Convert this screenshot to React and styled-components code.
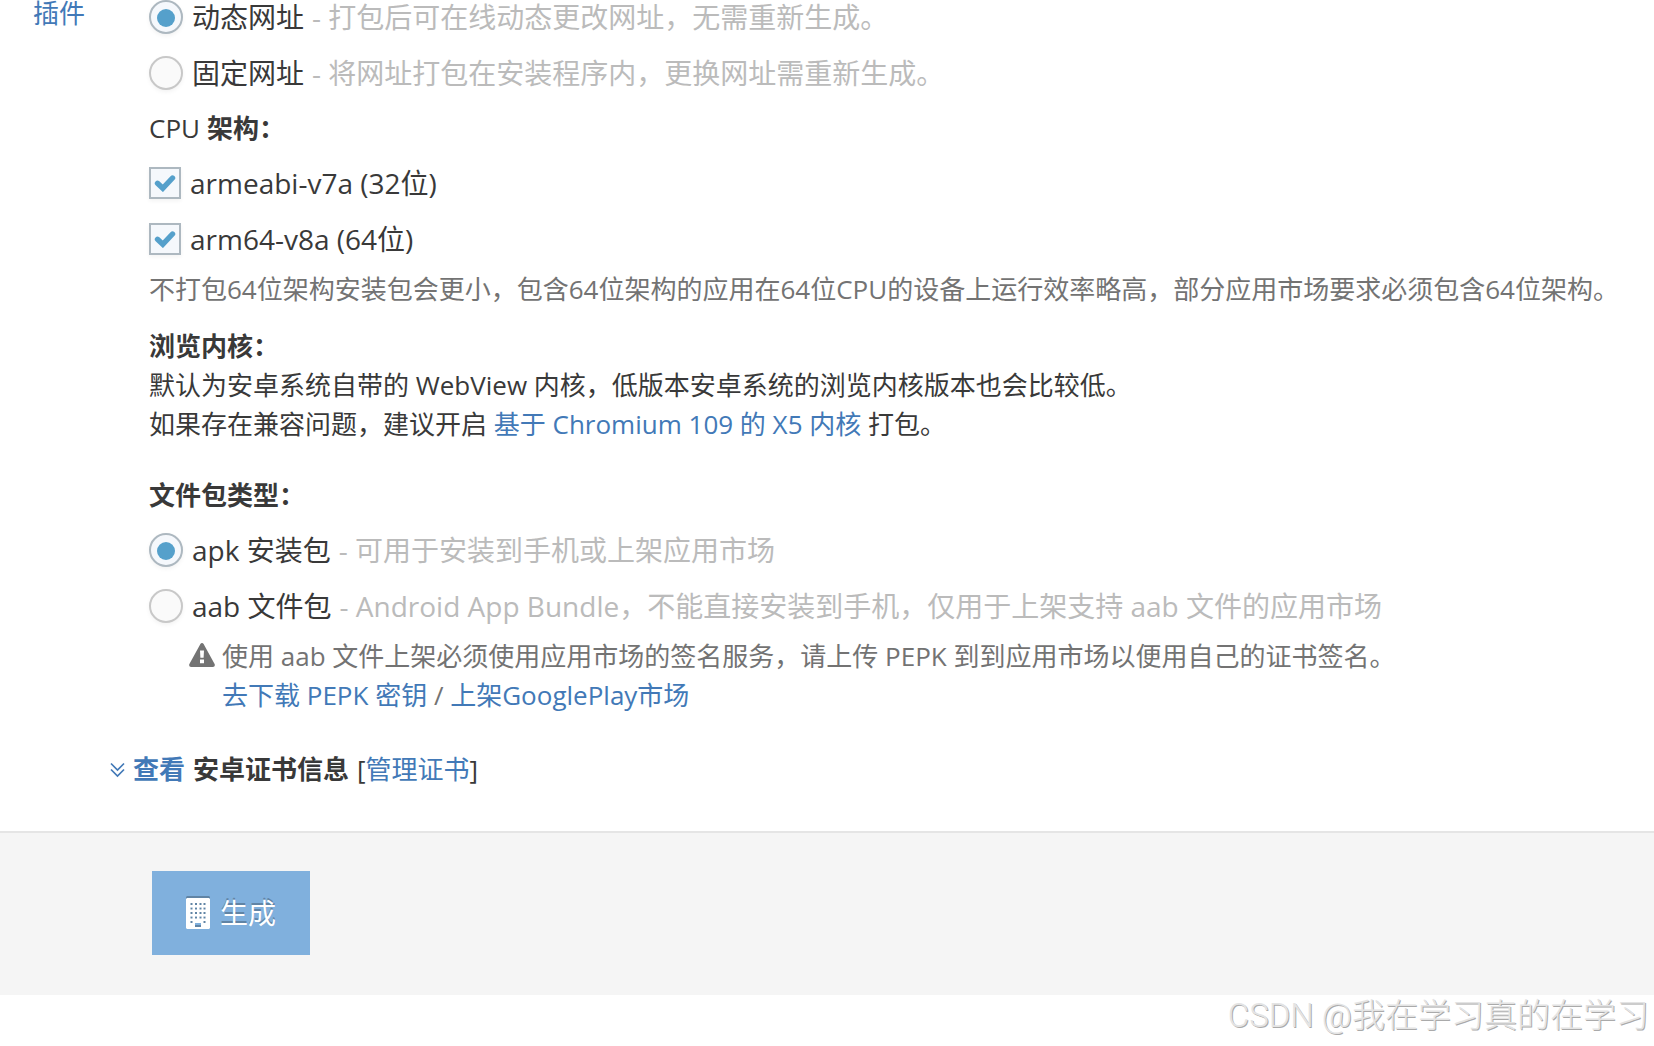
import styled, { createGlobalStyle, css } from "styled-components";

const GlobalStyle = createGlobalStyle`
  * {
    box-sizing: border-box;
  }

  body {
    margin: 0;
    overflow-x: hidden;
    background: #fff;
    color: #393939;
    font-family: "Open Sans", "Noto Sans CJK SC", sans-serif;
    font-size: 26px;
    line-height: 39px;
  }
`;

const Page = styled.div`
  display: flow-root;
`;

const Columns = styled.div`
  display: flex;
  align-items: flex-start;
  margin-top: -11px;
`;

const Sidebar = styled.nav`
  flex: none;
  width: 110px;
  padding: 11px 0 0 33px;
  line-height: 26px;
`;

const Link = styled.a`
  color: #4279b7;
  text-decoration: none;
  font-weight: ${({ $bold }) => ($bold ? 700 : 400)};
`;

const Content = styled.main`
  flex: 1;
  min-width: 0;
  padding-bottom: 42px;
`;

const Fields = styled.div`
  padding-left: 39px;
`;

const Group = styled.section`
  margin-bottom: ${({ $gap }) => $gap || 0}px;
`;

const Heading = styled.div`
  display: flex;
  align-items: center;
  gap: 7px;
  height: ${({ $tall }) => ($tall ? 54 : 39)}px;
  margin-bottom: ${({ $gap }) => $gap || 0}px;
`;

const Option = styled.label`
  display: flex;
  align-items: center;
  height: 56px;
  font-size: 28px;
  white-space: nowrap;
`;

const Muted = styled.span`
  margin-left: 8px;
  color: #bbb;
`;

const controlStyles = css`
  appearance: none;
  flex: none;
  margin: 0;
  border: 2px solid #c8c8c8;
  background: #fafafa;
  box-shadow: 0 2px 4px rgba(0, 0, 0, 0.05);

  &:checked {
    border-color: #adb8c0;
    background: #f5f8fc;
  }
`;

const Radio = styled.input.attrs({ type: "radio" })`
  ${controlStyles}
  display: grid;
  place-items: center;
  width: 34px;
  height: 34px;
  margin-right: 9px;
  border-radius: 50%;

  &:checked::before {
    content: "";
    width: 18px;
    height: 18px;
    margin-top: 2px;
    border-radius: 50%;
    background: #55a0cb;
  }
`;

const CheckBox = styled.span`
  display: grid;
  place-items: center;
  margin-right: 9px;

  > * {
    grid-area: 1 / 1;
  }

  svg {
    pointer-events: none;
  }

  input:not(:checked) + svg {
    visibility: hidden;
  }
`;

const CheckInput = styled.input.attrs({ type: "checkbox" })`
  ${controlStyles}
  width: 32px;
  height: 32px;
`;

const Text = styled.p`
  margin: 0;
`;

const Help = styled(Text)`
  margin: 3px 0 18px;
  color: #737373;
`;

const Notice = styled.div`
  display: grid;
  grid-template-columns: 26px 1fr;
  column-gap: 7px;
  margin: 3px 0 35px 40px;
  color: #737373;

  svg {
    margin-top: 6px;
  }
`;

const Certificate = styled.div`
  display: flex;
  align-items: center;
  gap: 8px;
`;

const Footer = styled.footer`
  border-top: 2px solid #e5e5e5;
  background: #f5f5f5;
  padding: 38px 0 40px 152px;
`;

const GenerateButton = styled.button`
  display: flex;
  align-items: center;
  justify-content: center;
  gap: 10px;
  width: 158px;
  height: 84px;
  border: 0;
  background: #80b0dd;
  color: #fff;
  font: inherit;
  font-size: 28px;
  text-shadow: 0 -2px 0 rgba(0, 0, 0, 0.25);

  svg {
    filter: drop-shadow(0 -2px 0 rgba(0, 0, 0, 0.25));
  }
`;

const Watermark = styled.div`
  padding: 1px 5px 0 0;
  color: #e4e4e4;
  font-family: Roboto, "Noto Sans CJK SC", sans-serif;
  font-size: 33px;
  font-weight: 300;
  text-align: right;
  text-shadow: 1px 1px 0 #aaa;
`;

const CheckIcon = () => (
  <svg width="22" height="18" viewBox="0 0 22 18" aria-hidden="true">
    <path
      d="M3.500 9.300l5.300 5L18.500 4"
      fill="none"
      stroke="#55a0cb"
      strokeWidth="5.400"
      strokeLinecap="round"
    />
  </svg>
);

const WarningIcon = () => (
  <svg width="26" height="24" viewBox="0 0 26 24" aria-hidden="true">
    <path
      fill="currentColor"
      fillRule="evenodd"
      d="M11.4 1c.7-1.3 2.5-1.3 3.2 0l11 20c.7 1.4-.2 3-1.700 3H2.100c-1.500 0-2.400-1.600-1.700-3zM11 7.500l.4 7.300h3.200l.4-7.300zM11 16.500v3.700h4v-3.700z"
    />
  </svg>
);

const DoubleAngleIcon = () => (
  <svg width="15" height="16" viewBox="0 0 15 16" aria-hidden="true">
    <path d="M1 1.500l6.500 6.500L14 1.500M1 7.500l6.500 6.500L14 7.500" fill="none" stroke="#4279b7" strokeWidth="1.700" />
  </svg>
);

const BuildingIcon = () => (
  <svg width="24" height="31" viewBox="0 0 24 31" aria-hidden="true">
    <path
      fill="#fff"
      fillRule="evenodd"
      d={
        "M1 0h22l1 1v29l-1 1H1l-1-1V1zM9 25v4h6v-4z" +
        [5, 9.5, 14, 18.5]
          .map((y) => [4.5, 9, 13.500, 17.500].map((x) => `M${x} ${y}h2v2h-2z`).join(""))
          .join("") +
        "M4.500 23h2v2h-2zM17.500 23h2v2h-2z"
      }
    />
  </svg>
);

const RadioOption = ({ name, label, note, checked }) => (
  <Option>
    <Radio name={name} defaultChecked={checked} />
    {label}
    <Muted>- {note}</Muted>
  </Option>
);

const CheckOption = ({ label }) => (
  <Option>
    <CheckBox>
      <CheckInput defaultChecked />
      <CheckIcon />
    </CheckBox>
    {label}
  </Option>
);

const App = () => (
  <Page>
    <GlobalStyle />
    <Columns>
      <Sidebar>
        <Link href="#plugins">插件</Link>
      </Sidebar>
      <Content>
        <Fields>
          <Group>
            <RadioOption name="url" label="动态网址" note="打包后可在线动态更改网址，无需重新生成。" checked />
            <RadioOption name="url" label="固定网址" note="将网址打包在安装程序内，更换网址需重新生成。" />
          </Group>
          <Group>
            <Heading $tall>
              CPU <b>架构：</b>
            </Heading>
            <CheckOption label="armeabi-v7a (32位)" />
            <CheckOption label="arm64-v8a (64位)" />
            <Help>
              不打包64位架构安装包会更小，包含64位架构的应用在64位CPU的设备上运行效率略高，部分应用市场要求必须包含64位架构。
            </Help>
          </Group>
          <Group $gap={32}>
            <Heading>
              <b>浏览内核：</b>
            </Heading>
            <Text>默认为安卓系统自带的 WebView 内核，低版本安卓系统的浏览内核版本也会比较低。</Text>
            <Text>
              如果存在兼容问题，建议开启 <Link href="#x5">基于 Chromium 109 的 X5 内核</Link> 打包。
            </Text>
          </Group>
          <Group>
            <Heading $gap={7}>
              <b>文件包类型：</b>
            </Heading>
            <RadioOption name="package" label="apk 安装包" note="可用于安装到手机或上架应用市场" checked />
            <RadioOption
              name="package"
              label="aab 文件包"
              note="Android App Bundle，不能直接安装到手机，仅用于上架支持 aab 文件的应用市场"
            />
            <Notice>
              <WarningIcon />
              <div>
                <Text>使用 aab 文件上架必须使用应用市场的签名服务，请上传 PEPK 到到应用市场以便用自己的证书签名。</Text>
                <Text>
                  <Link href="#pepk">去下载 PEPK 密钥</Link> / <Link href="#google-play">上架GooglePlay市场</Link>
                </Text>
              </div>
            </Notice>
          </Group>
        </Fields>
        <Certificate>
          <DoubleAngleIcon />
          <Link href="#certificate" $bold>
            查看
          </Link>
          <b>安卓证书信息</b>
          <span>
            [<Link href="#manage">管理证书</Link>]
          </span>
        </Certificate>
      </Content>
    </Columns>
    <Footer>
      <GenerateButton type="button">
        <BuildingIcon />
        生成
      </GenerateButton>
    </Footer>
    <Watermark>CSDN @我在学习真的在学习</Watermark>
  </Page>
);

export default App;
